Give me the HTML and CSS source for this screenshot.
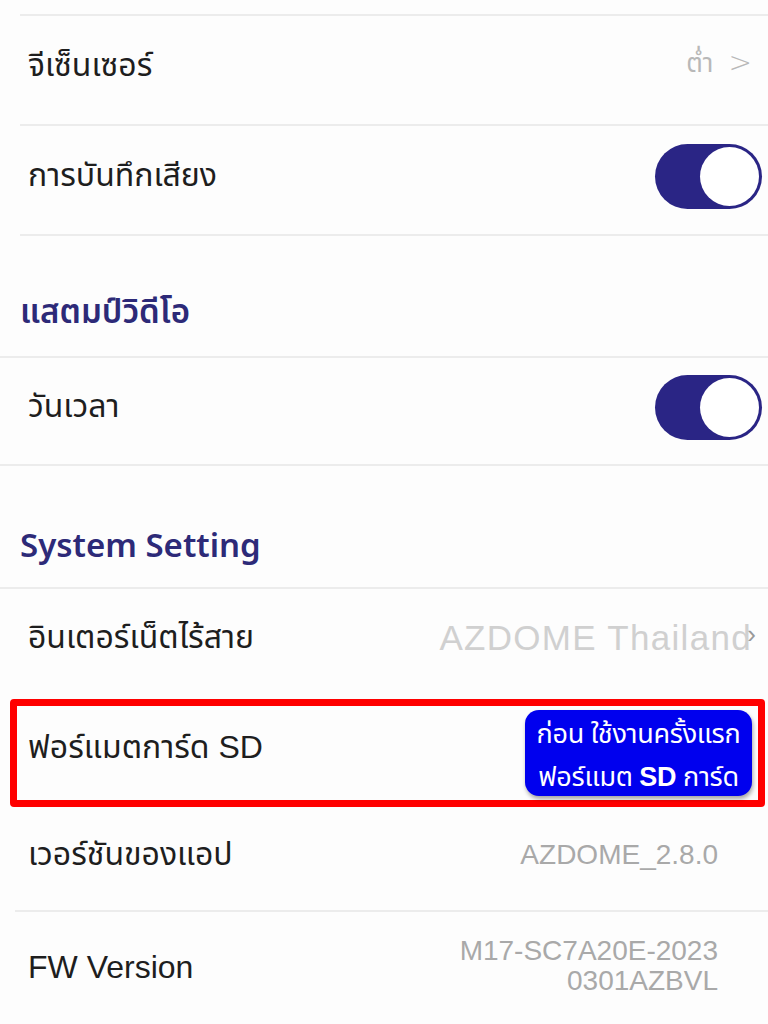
FILE: index.html
```html
<!DOCTYPE html>
<html lang="th">
<head>
<meta charset="utf-8">
<link rel="stylesheet" href="styles.css">
</head>
<body>
<div class="screen">
  <div class="top-gap"></div>
  <div class="row inset">
    <span class="label">จีเซ็นเซอร์</span>
    <span class="value small">ต่ำ <span class="chev">&gt;</span></span>
  </div>
  <div class="row inset">
    <span class="label">การบันทึกเสียง</span>
    <span class="toggle"><span class="knob"></span></span>
  </div>
  <div class="header full"><span>แสตมป์วิดีโอ</span></div>
  <div class="row full short">
    <span class="label">วันเวลา</span>
    <span class="toggle"><span class="knob"></span></span>
  </div>
  <div class="header full h2"><span>System Setting</span></div>
  <div class="row wifi">
    <span class="label">อินเตอร์เน็ตไร้สาย</span>
    <span class="value big">AZDOME Thailand<span class="chev2">›</span></span>
  </div>
  <div class="highlight">
    <span class="label">ฟอร์แมตการ์ด SD</span>
    <div class="badge">ก่อน ใช้งานครั้งแรก<br>ฟอร์แมต <b>SD</b> การ์ด</div>
  </div>
  <div class="row inset app">
    <span class="label">เวอร์ชันของแอป</span>
    <span class="value ver">AZDOME_2.8.0</span>
  </div>
  <div class="row fw">
    <span class="label">FW Version</span>
    <span class="value ver two">M17-SC7A20E-2023<br>0301AZBVL</span>
  </div>
</div>
</body>
</html>
```

FILE: styles.css
```css
html, body {
  margin: 0;
  padding: 0;
  background: #fdfdfd;
}
body {
  font-family: "Liberation Sans", "Noto Sans Thai", "Noto Sans", sans-serif;
  color: #1c1c1c;
  width: 768px;
  height: 1024px;
  overflow: hidden;
}
.screen {
  display: flex;
  flex-direction: column;
}
.top-gap {
  height: 14px;
  margin-left: 20px;
  border-bottom: 2px solid #ececec;
}
.row {
  display: flex;
  align-items: center;
  justify-content: space-between;
  height: 110px;
  padding: 0 6px 8px 28px;
  box-sizing: border-box;
  border-bottom: 2px solid #ececec;
}
.row.inset {
  margin-left: 20px;
  padding-left: 8px;
}
.row.short {
  height: 108px;
}
.label {
  font-size: 32px;
  color: #1e1e1e;
}
.value {
  color: #b8b8b8;
}
.value.small {
  font-size: 26px;
  margin-right: 10px;
  position: relative;
  top: -2px;
}
.chev {
  font-family: "DejaVu Sans", sans-serif;
  font-weight: 300;
  color: #b8b8b8;
  margin-left: 8px;
  font-size: 28px;
}
.toggle {
  width: 107px;
  height: 65px;
  border-radius: 33px;
  background: #2a2585;
  display: flex;
  align-items: center;
  justify-content: flex-end;
  padding: 3px;
  box-sizing: border-box;
}
.knob {
  width: 59px;
  height: 59px;
  border-radius: 50%;
  background: #fff;
}
.header {
  height: 122px;
  display: flex;
  align-items: flex-end;
  padding: 0 0 18px 20px;
  box-sizing: border-box;
  border-bottom: 2px solid #ececec;
}
.header.h2 {
  height: 123px;
  padding-bottom: 20px;
}
.header span {
  font-family: "Noto Sans", "Noto Sans Thai", sans-serif;
  font-size: 33px;
  font-weight: 600;
  color: #2d2a78;
}
.row.wifi {
  height: 110px;
  border-bottom: none;
  padding-right: 16px;
  padding-bottom: 12px;
}
.value.big {
  font-size: 35px;
  letter-spacing: 1.3px;
  color: #d0d0d0;
  position: relative;
}
.chev2 {
  position: absolute;
  right: -4px;
  top: 1px;
  color: #999;
  font-size: 26px;
  letter-spacing: 0;
}
.highlight {
  margin: 0 3px 0 10px;
  height: 108px;
  border: 7px solid #ff0000;
  border-radius: 4px;
  box-sizing: border-box;
  display: flex;
  align-items: center;
  justify-content: space-between;
  padding: 0 6px 0 11px;
}
.highlight .label {
  position: relative;
  top: -5px;
}
.badge {
  background: #0000ee;
  color: #fff;
  border-radius: 14px;
  width: 227px;
  height: 86px;
  box-sizing: border-box;
  padding: 4px 0 0 0;
  font-family: "Noto Sans Thai", "Liberation Sans", sans-serif;
  font-size: 27px;
  line-height: 42px;
  text-align: center;
  white-space: nowrap;
  box-shadow: 1px 3px 4px rgba(0,0,0,0.35);
  letter-spacing: -0.3px;
}
.badge b {
  font-family: "Liberation Sans", sans-serif;
  font-weight: 700;
}
.row.app {
  height: 105px;
  margin-left: 15px;
  padding-left: 13px;
  padding-right: 50px;
}
.value.ver {
  font-size: 28px;
  color: #a9a9a9;
}
.row.fw {
  border-bottom: none;
  padding-right: 50px;
  padding-bottom: 0;
}
.value.two {
  text-align: right;
  line-height: 30px;
  position: relative;
  top: -1px;
}
```
